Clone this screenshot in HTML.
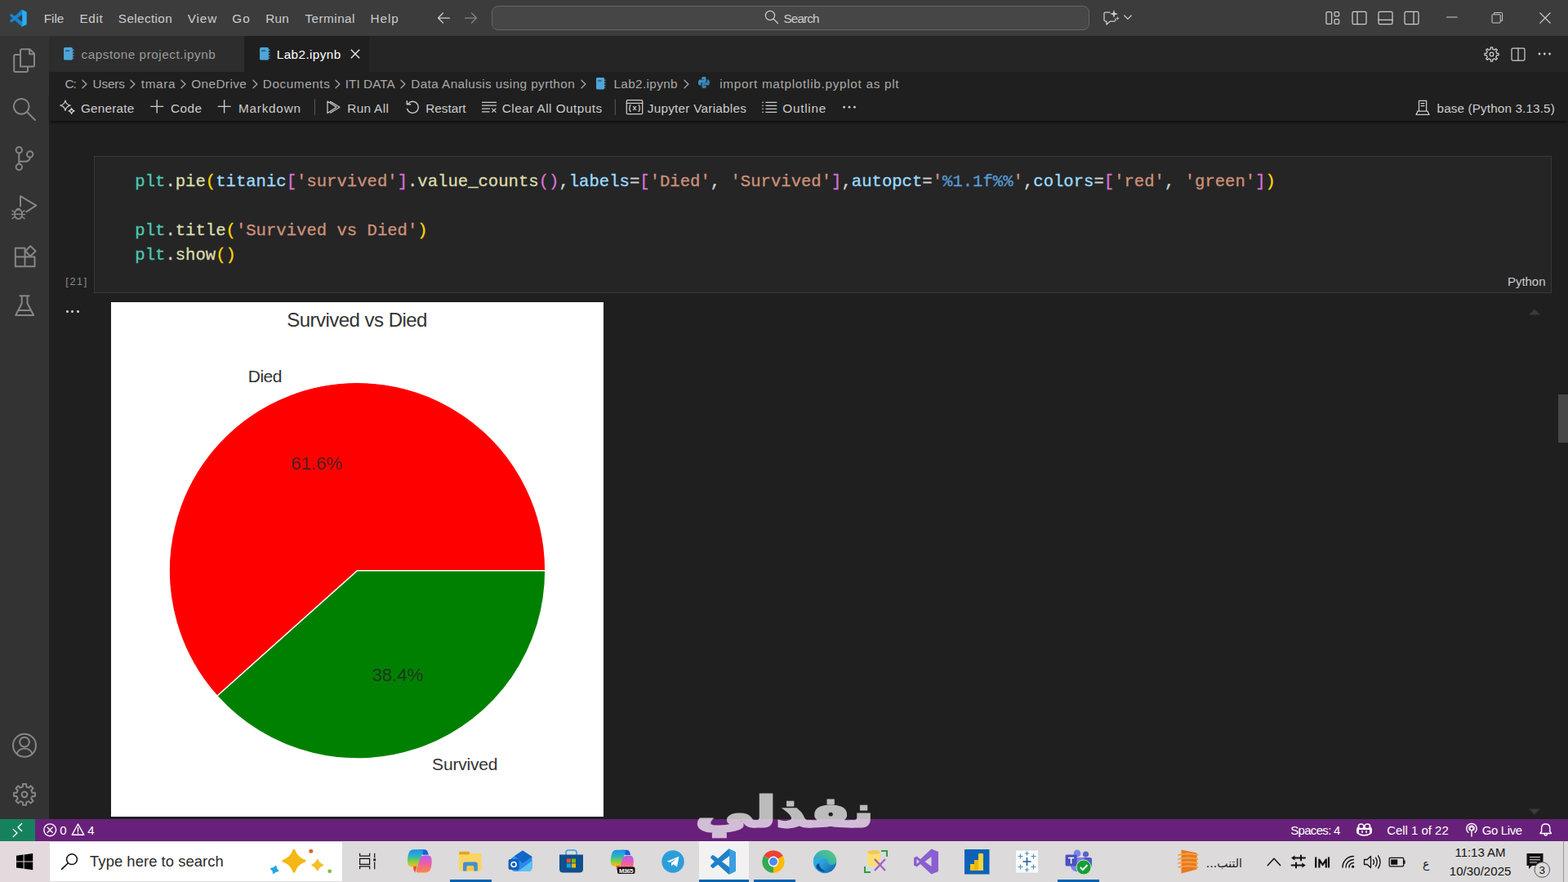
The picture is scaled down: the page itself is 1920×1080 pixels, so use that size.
<!DOCTYPE html>
<html lang="en">
<head>
<meta charset="utf-8">
<title>Lab2.ipynb - Visual Studio Code</title>
<style>
*{box-sizing:border-box;margin:0;padding:0}
html,body{width:1920px;height:1080px;overflow:hidden;background:#1f1f1f}
body{position:relative;font-family:"Liberation Sans",sans-serif;font-size:16px;color:#ccc}
.a{position:absolute}
.t{position:absolute;white-space:nowrap;line-height:1}
svg{position:absolute;overflow:visible}
.s{fill:none;stroke:#ccc;stroke-width:1.25;stroke-linecap:round;stroke-linejoin:round}
.g{fill:none;stroke:#868686;stroke-width:2;stroke-linecap:round;stroke-linejoin:round}
#titlebar{left:0;top:0;width:1920px;height:44px;background:#3c3c3c}
#search{left:602px;top:7px;width:732px;height:30px;background:#464646;border:1px solid #666;border-radius:8px}
#activity{left:0;top:44px;width:60px;height:959px;background:#333}
#tabs{left:60px;top:44px;width:1860px;height:44px;background:#252526}
#tab1{left:0;top:0;width:239px;height:44px;background:#2d2d2d}
#tab2{left:239px;top:0;width:153px;height:44px;background:#1f1f1f}
#crumbs{left:60px;top:88px;width:1860px;height:27px;background:#1f1f1f}
#nbtool{left:60px;top:115px;width:1860px;height:33px;background:#1f1f1f;box-shadow:0 3px 3px -1px rgba(0,0,0,.55)}
#cell{left:115px;top:191px;width:1785px;height:168px;background:#252526;border:1px solid #383838}
#plot{left:136px;top:370px;width:603px;height:630px;background:#fff}
#status{left:0;top:1003px;width:1920px;height:27px;background:#68217a}
#remote{left:0;top:0;width:43px;height:27px;background:#16825d}
#taskbar{left:0;top:1030px;width:1920px;height:50px;background:#dcdadb}
#start{left:0;top:0;width:61px;height:50px;background:#e4dadd}
#tsearch{left:61px;top:1px;width:358px;height:48px;background:#fff}
.ul{position:absolute;height:3px;top:47px;background:#0063b1}
pre{position:absolute;font-family:"Liberation Mono",monospace;font-size:20.6px;line-height:30px;color:#d4d4d4;white-space:pre;-webkit-text-stroke:.3px currentColor}
.m{color:#4ec9b0}.f{color:#dcdcaa}.v{color:#9cdcfe}.q{color:#ce9178}.y{color:#ffd700}.p{color:#da70d6}.b{color:#569cd6}
</style>
</head>
<body>
<div id="titlebar" class="a">
<svg style="left:11.8px;top:11.8px" width="20.5" height="20.5" viewBox="0 0 100 100"><path d="M96.46 10.8 L75.86 .88 a6.23 6.23 0 0 0 -7.1 1.2 L29.35 38.04 12.19 25.01 a4.16 4.16 0 0 0 -5.31 .24 l-5.5 5.01 a4.17 4.17 0 0 0 0 6.16 L16.25 50 1.37 63.58 a4.17 4.17 0 0 0 0 6.16 l5.5 5.01 a4.16 4.16 0 0 0 5.32 .24 l17.16 -13.03 39.41 35.96 a6.22 6.22 0 0 0 7.1 1.2 l20.6 -9.9 A6.25 6.25 0 0 0 100 83.59 V16.41 a6.25 6.25 0 0 0 -3.54 -5.62Z M75.02 72.7 L45.11 50 l29.9 -22.7Z" fill="#1685d0" fill-rule="evenodd"/><path d="M75.86 .88 L96.46 10.8 A6.25 6.25 0 0 1 100 16.41 V83.59 A6.25 6.25 0 0 1 96.46 89.2 L75.86 99.1 A6.2 6.2 0 0 1 70 99 L75.02 92 V8 L70 1 A6.2 6.2 0 0 1 75.86 .88Z" fill="#2aaef6"/></svg>
<div class="t" style="left:53.8px;top:15.0px;font-size:15.3px;color:#ccc;letter-spacing:-0.08px;">File</div>
<div class="t" style="left:97.5px;top:15.0px;font-size:15.3px;color:#ccc;letter-spacing:0.65px;">Edit</div>
<div class="t" style="left:144.8px;top:15.0px;font-size:15.3px;color:#ccc;letter-spacing:0.38px;">Selection</div>
<div class="t" style="left:229.8px;top:15.0px;font-size:15.3px;color:#ccc;letter-spacing:0.84px;">View</div>
<div class="t" style="left:284.2px;top:15.0px;font-size:15.3px;color:#ccc;letter-spacing:1.19px;">Go</div>
<div class="t" style="left:325.2px;top:15.0px;font-size:15.3px;color:#ccc;letter-spacing:0.27px;">Run</div>
<div class="t" style="left:373.5px;top:15.0px;font-size:15.3px;color:#ccc;letter-spacing:0.45px;">Terminal</div>
<div class="t" style="left:453.5px;top:15.0px;font-size:15.3px;color:#ccc;letter-spacing:0.94px;">Help</div>
<svg style="left:535px;top:14px" width="17" height="16" viewBox="0 0 17 16"><path class="s" d="M1.5 8 H15.5 M7.5 2 L1.5 8 L7.5 14"/></svg>
<svg style="left:568px;top:14px" width="17" height="16" viewBox="0 0 17 16"><path class="s" style="stroke:#868686" d="M1.5 8 H15.5 M9.5 2 L15.5 8 L9.5 14"/></svg>
<div id="search" class="a"></div>
<svg style="left:936px;top:12px" width="18" height="18" viewBox="0 0 18 18"><circle class="s" cx="7" cy="7" r="5.6"/><path class="s" d="M11.2 11.2 L16.5 16.5"/></svg>
<div class="t" style="left:959.5px;top:15.0px;font-size:15.3px;color:#ccc;letter-spacing:-0.90px;">Search</div>
<svg style="left:1351px;top:12px" width="20" height="20" viewBox="0 0 20 20"><path class="s" d="M8 3 H2.5 Q1 3 1 4.5 V12.5 Q1 14 2.5 14 H4 V18 L8.5 14 H13.5 Q15 14 15 12.5 V11"/><path d="M13 0 L14.2 3.8 L18 5 L14.2 6.2 L13 10 L11.8 6.2 L8 5 L11.8 3.8 Z M17.5 8 L18.1 9.9 L20 10.5 L18.1 11.1 L17.5 13 L16.9 11.1 L15 10.5 L16.9 9.9 Z" fill="#ccc"/></svg>
<svg style="left:1376px;top:18px" width="10" height="7" viewBox="0 0 10 7"><path class="s" d="M.8 1 L5 5.4 L9.2 1"/></svg>
<svg style="left:1623px;top:13px" width="18" height="18" viewBox="0 0 18 18"><rect class="s" x="1" y="1.6" width="6.6" height="14.8" rx="1.4"/><rect class="s" x="11" y="1.6" width="5.6" height="5.2" rx="1.4"/><rect class="s" x="11" y="10.6" width="5.6" height="5.8" rx="1.4"/></svg>
<svg style="left:1655px;top:13px" width="19" height="18" viewBox="0 0 19 18"><rect class="s" x="1" y="1.3" width="17" height="15.4" rx="1.6"/><path class="s" d="M7 1.3 V16.7"/></svg>
<svg style="left:1687px;top:13px" width="19" height="18" viewBox="0 0 19 18"><rect class="s" x="1" y="1.3" width="17" height="15.4" rx="1.6"/><path class="s" d="M1 11.3 H18"/></svg>
<svg style="left:1719px;top:13px" width="19" height="18" viewBox="0 0 19 18"><rect class="s" x="1" y="1.3" width="17" height="15.4" rx="1.6"/><path class="s" d="M12 1.3 V16.7"/></svg>
<svg style="left:1771px;top:20px" width="14" height="2" viewBox="0 0 14 2"><path d="M0 1 H13.5" stroke="#ccc" stroke-width="1"/></svg>
<svg style="left:1826px;top:14px" width="15" height="15" viewBox="0 0 15 15"><rect x="1" y="3.8" width="10.2" height="10.2" rx=".8" fill="none" stroke="#ccc"/><path d="M3.6 3.6 V1.5 H12.6 Q13.6 1.5 13.6 2.5 V11.4 H11.4" fill="none" stroke="#ccc"/></svg>
<svg style="left:1885px;top:15px" width="14" height="14" viewBox="0 0 14 14"><path d="M.5 .5 L13.5 13.5 M13.5 .5 L.5 13.5" stroke="#ccc" stroke-width="1.1"/></svg>
</div>
<div id="activity" class="a"></div>
<svg style="left:0;top:0" width="60" height="1003" viewBox="0 0 60 1003">
<path class="g" d="M25 81.5 V62 Q25 60.3 26.7 60.3 H36.5 L42 65.8 V79.8 Q42 81.5 40.3 81.5 Z M36 60.5 V66.3 H41.8"/>
<path class="g" d="M24.6 67 H18.9 Q17.2 67 17.2 68.7 V86.3 Q17.2 88 18.9 88 H32.3 Q34 88 34 86.3 V81.8"/>
<circle class="g" cx="26.2" cy="130.3" r="9.4"/><path class="g" d="M33.2 137.3 L43 147"/>
<circle class="g" cx="23.3" cy="183.7" r="3.7"/><circle class="g" cx="36.7" cy="189" r="3.7"/><circle class="g" cx="23.3" cy="204.5" r="3.7"/><path class="g" d="M23.3 187.6 V200.6 M36.7 192.8 Q36.7 197.8 30 197.8 H23.6"/>
<path class="g" d="M25 252.5 V240.2 L44.3 251.6 L32.3 259.3"/>
<ellipse class="g" cx="22.5" cy="262.3" rx="4.6" ry="5.8" style="stroke-width:1.8"/><path class="g" style="stroke-width:1.5" d="M17.9 262.3 H27.1 M15 258 L18.3 259.8 M30 258 L26.7 259.8 M14.6 262.6 H17.6 M27.4 262.6 H30.4 M15 267.6 L18.3 265.4 M30 267.6 L26.7 265.4 M20 256.8 Q22.5 254.5 25 256.8"/>
<path class="g" d="M30.5 303.8 H18.8 V326.2 H42.5 V314.6 H18.8 M30.5 303.8 V326.2"/><path class="g" d="M37.3 301.2 L43.6 307.5 L37.3 313.8 L31 307.5 Z"/>
<path class="g" d="M24.5 362.2 H35.6 M26.7 362.5 V371.5 L19.2 386 H41.2 L33.5 371.5 V362.5 M22.3 380 H38"/>
<circle class="g" cx="30" cy="912.8" r="14"/><circle class="g" cx="30" cy="908.6" r="5.9"/><path class="g" d="M20.6 922.6 Q23.4 916.6 30 916.6 Q36.6 916.6 39.4 922.6"/>
<path class="g" d="M27.83 963.45 L27.95 959.96 L32.05 959.96 L32.17 963.45 L35.15 964.68 L37.70 962.30 L40.60 965.20 L38.22 967.75 L39.45 970.73 L42.94 970.85 L42.94 974.95 L39.45 975.07 L38.22 978.05 L40.60 980.60 L37.70 983.50 L35.15 981.12 L32.17 982.35 L32.05 985.84 L27.95 985.84 L27.83 982.35 L24.85 981.12 L22.30 983.50 L19.40 980.60 L21.78 978.05 L20.55 975.07 L17.06 974.95 L17.06 970.85 L20.55 970.73 L21.78 967.75 L19.40 965.20 L22.30 962.30 L24.85 964.68Z"/><circle class="g" cx="30" cy="972.8" r="3.4"/>
</svg>
<div id="tabs" class="a"><div id="tab1" class="a"></div><div id="tab2" class="a"></div></div>
<svg style="left:77.7px;top:58px" width="13" height="15.5" viewBox="0 0 12.5 15"><path d="M1.5 0 H9 Q10.5 0 10.5 1.5 V13.5 Q10.5 15 9 15 H1.5 Q0 15 0 13.5 V1.5 Q0 0 1.5 0Z" fill="#4fa5d8"/><rect x="2" y="3.4" width="5" height="1.5" fill="#235a80"/><path d="M11.3 2.5 V4 M11.3 5.8 V7.3 M11.3 9.1 V10.6 M11.3 12.2 V13.2" stroke="#4fa5d8" stroke-width="1.3"/></svg>
<div class="t" style="left:99.5px;top:59.0px;font-size:15.3px;color:#9a9a9a;letter-spacing:0.53px;">capstone project.ipynb</div>
<svg style="left:317.5px;top:58px" width="13" height="15.5" viewBox="0 0 12.5 15"><path d="M1.5 0 H9 Q10.5 0 10.5 1.5 V13.5 Q10.5 15 9 15 H1.5 Q0 15 0 13.5 V1.5 Q0 0 1.5 0Z" fill="#4fa5d8"/><rect x="2" y="3.4" width="5" height="1.5" fill="#235a80"/><path d="M11.3 2.5 V4 M11.3 5.8 V7.3 M11.3 9.1 V10.6 M11.3 12.2 V13.2" stroke="#4fa5d8" stroke-width="1.3"/></svg>
<div class="t" style="left:338.8px;top:59.0px;font-size:15.3px;color:#fff;letter-spacing:0.39px;">Lab2.ipynb</div>
<svg style="left:429px;top:60px" width="12" height="12" viewBox="0 0 12 12"><path d="M.8 .8 L11.2 11.2 M11.2 .8 L.8 11.2" stroke="#e8e8e8" stroke-width="1.4"/></svg>
<svg style="left:1817px;top:57px" width="19" height="19" viewBox="0 0 19 19"><path d="M8.29 3.21 L8.37 0.97 L10.63 0.97 L10.71 3.21 L13.09 4.20 L14.73 2.67 L16.33 4.27 L14.80 5.91 L15.79 8.29 L18.03 8.37 L18.03 10.63 L15.79 10.71 L14.80 13.09 L16.33 14.73 L14.73 16.33 L13.09 14.80 L10.71 15.79 L10.63 18.03 L8.37 18.03 L8.29 15.79 L5.91 14.80 L4.27 16.33 L2.67 14.73 L4.20 13.09 L3.21 10.71 L0.97 10.63 L0.97 8.37 L3.21 8.29 L4.20 5.91 L2.67 4.27 L4.27 2.67 L5.91 4.20Z" class="s" style="stroke-width:1.3"/><circle class="s" cx="9.5" cy="9.5" r="2.3"/></svg>
<svg style="left:1850px;top:58px" width="18" height="17" viewBox="0 0 18 17"><rect class="s" x="1" y="1" width="16" height="15" rx="1.5"/><path class="s" d="M9 1 V16"/></svg>
<svg style="left:1883px;top:64px" width="17" height="4" viewBox="0 0 17 4"><circle cx="2" cy="2" r="1.4" fill="#ccc"/><circle cx="8.3" cy="2" r="1.4" fill="#ccc"/><circle cx="14.6" cy="2" r="1.4" fill="#ccc"/></svg>
<div id="crumbs" class="a"></div>
<div class="t" style="left:79.5px;top:95.0px;font-size:15.3px;color:#a9a9a9;letter-spacing:-1.00px;">C:</div>
<div class="t" style="left:113.5px;top:95.0px;font-size:15.3px;color:#a9a9a9;letter-spacing:-0.16px;">Users</div>
<div class="t" style="left:172.8px;top:95.0px;font-size:15.3px;color:#a9a9a9;letter-spacing:0.65px;">tmara</div>
<div class="t" style="left:234.2px;top:95.0px;font-size:15.3px;color:#a9a9a9;letter-spacing:0.43px;">OneDrive</div>
<div class="t" style="left:321.8px;top:95.0px;font-size:15.3px;color:#a9a9a9;letter-spacing:0.58px;">Documents</div>
<div class="t" style="left:422.8px;top:95.0px;font-size:15.3px;color:#a9a9a9;letter-spacing:0.05px;">ITI DATA</div>
<div class="t" style="left:503.2px;top:95.0px;font-size:15.3px;color:#a9a9a9;letter-spacing:0.42px;">Data Analusis using pyrthon</div>
<div class="t" style="left:751.5px;top:95.0px;font-size:15.3px;color:#a9a9a9;letter-spacing:0.35px;">Lab2.ipynb</div>
<div class="t" style="left:881.2px;top:95.0px;font-size:15.3px;color:#a9a9a9;letter-spacing:0.71px;">import matplotlib.pyplot as plt</div>
<svg style="left:100.3px;top:95.5px" width="8" height="13" viewBox="0 0 8 13"><path d="M1 2.2 L5.9 7 L1 11.8" fill="none" stroke="#a9a9a9" stroke-width="1.25" stroke-linecap="round" stroke-linejoin="round"/></svg>
<svg style="left:159.3px;top:95.5px" width="8" height="13" viewBox="0 0 8 13"><path d="M1 2.2 L5.9 7 L1 11.8" fill="none" stroke="#a9a9a9" stroke-width="1.25" stroke-linecap="round" stroke-linejoin="round"/></svg>
<svg style="left:220.5px;top:95.5px" width="8" height="13" viewBox="0 0 8 13"><path d="M1 2.2 L5.9 7 L1 11.8" fill="none" stroke="#a9a9a9" stroke-width="1.25" stroke-linecap="round" stroke-linejoin="round"/></svg>
<svg style="left:308.5px;top:95.5px" width="8" height="13" viewBox="0 0 8 13"><path d="M1 2.2 L5.9 7 L1 11.8" fill="none" stroke="#a9a9a9" stroke-width="1.25" stroke-linecap="round" stroke-linejoin="round"/></svg>
<svg style="left:409.7px;top:95.5px" width="8" height="13" viewBox="0 0 8 13"><path d="M1 2.2 L5.9 7 L1 11.8" fill="none" stroke="#a9a9a9" stroke-width="1.25" stroke-linecap="round" stroke-linejoin="round"/></svg>
<svg style="left:490px;top:95.5px" width="8" height="13" viewBox="0 0 8 13"><path d="M1 2.2 L5.9 7 L1 11.8" fill="none" stroke="#a9a9a9" stroke-width="1.25" stroke-linecap="round" stroke-linejoin="round"/></svg>
<svg style="left:710.7px;top:95.5px" width="8" height="13" viewBox="0 0 8 13"><path d="M1 2.2 L5.9 7 L1 11.8" fill="none" stroke="#a9a9a9" stroke-width="1.25" stroke-linecap="round" stroke-linejoin="round"/></svg>
<svg style="left:836.5px;top:95.5px" width="8" height="13" viewBox="0 0 8 13"><path d="M1 2.2 L5.9 7 L1 11.8" fill="none" stroke="#a9a9a9" stroke-width="1.25" stroke-linecap="round" stroke-linejoin="round"/></svg>
<svg style="left:730px;top:94.5px" width="12" height="14.5" viewBox="0 0 12.5 15"><path d="M1.5 0 H9 Q10.5 0 10.5 1.5 V13.5 Q10.5 15 9 15 H1.5 Q0 15 0 13.5 V1.5 Q0 0 1.5 0Z" fill="#4fa5d8"/><rect x="2" y="3.4" width="5" height="1.5" fill="#235a80"/><path d="M11.3 2.5 V4 M11.3 5.8 V7.3 M11.3 9.1 V10.6 M11.3 12.2 V13.2" stroke="#4fa5d8" stroke-width="1.3"/></svg>
<svg style="left:855px;top:94px" width="14" height="14" viewBox="0 0 14 14"><path d="M6.9 0 C4 0 4.2 1.3 4.2 1.3 V2.9 H7 V3.4 H2.4 C2.4 3.4 0 3.1 0 6.9 C0 10.7 2.1 10.5 2.1 10.5 H3.4 V8.6 C3.4 8.6 3.3 6.9 5.1 6.9 H8 C8 6.9 9.6 6.9 9.6 5.3 V1.7 C9.6 1.7 9.9 0 6.9 0Z" fill="#3c8fc4"/><path d="M7.1 14 C10 14 9.8 12.7 9.8 12.7 V11.1 H7 V10.6 H11.6 C11.6 10.6 14 10.9 14 7.1 C14 3.3 11.9 3.5 11.9 3.5 H10.6 V5.4 C10.6 5.4 10.7 7.1 8.9 7.1 H6 C6 7.1 4.4 7.1 4.4 8.7 V12.3 C4.4 12.3 4.1 14 7.1 14Z" fill="#3c8fc4" opacity=".85"/></svg>
<div id="nbtool" class="a"></div>
<svg style="left:0;top:0" width="1920" height="150" viewBox="0 0 1920 150">
<path class="s" d="M80 122.99999999999999 Q81.04 128.16 86.2 129.2 Q81.04 130.24 80 135.39999999999998 Q78.96 130.24 73.8 129.2 Q78.96 128.16 80 122.99999999999999Z"/><path class="s" d="M87.6 132.3 Q88.19 135.21 91.1 135.8 Q88.19 136.39 87.6 139.3 Q87.01 136.39 84.1 135.8 Q87.01 135.21 87.6 132.3Z"/>
<path class="s" style="stroke-width:1.4;stroke-linecap:butt" d="M184.2 130.4 H200.2 M192.2 122.2 V138.6"/>
<path class="s" style="stroke-width:1.4;stroke-linecap:butt" d="M266.6 130.4 H282.6 M274.6 122.2 V138.6"/>
<path d="M385.5 121.3 V140.8" stroke="#5a5a5a" stroke-width="1"/>
<path d="M753.3 121.3 V140.8" stroke="#5a5a5a" stroke-width="1"/>
<path class="s" d="M401 124 V138.6 L412 131.3 Z M404.5 124.4 L416 131.3 L404.5 138.2"/>
<path class="s" style="stroke-width:1.4" d="M499.5 127.3 A7 7 0 1 1 498.6 133.5 M498.3 123.6 V127.8 H502.6"/>
<path class="s" style="stroke-linecap:butt" d="M590 125.4 H608 M590 129.2 H608 M590 133 H600 M590 136.8 H599.5 M602.2 132.6 L607.4 137.6 M607.4 132.6 L602.2 137.6"/>
<rect class="s" x="767.3" y="122.6" width="19.4" height="17" rx="1.2"/><path class="s" d="M767.3 126.3 H786.7"/>
<path class="s" style="stroke-linecap:butt;stroke-width:1.3" d="M937.5 125.3 H951.3 M937.5 129.3 H951.3 M937.5 133.3 H951.3 M937.5 137.3 H951.3"/><path style="stroke:#ccc;stroke-width:1.3" d="M933.3 125.3 H934.8 M933.3 129.3 H934.8 M933.3 133.3 H934.8 M933.3 137.3 H934.8"/>
<circle cx="1033.6" cy="131.2" r="1.4" fill="#ccc"/>
<circle cx="1040" cy="131.2" r="1.4" fill="#ccc"/>
<circle cx="1046.4" cy="131.2" r="1.4" fill="#ccc"/>
<path class="s" d="M1737.5 136 V123.4 H1746.6 V136 M1734 140.4 H1750 L1748 136 H1736 Z M1740 126.5 H1744 M1740 129.5 H1744"/>
</svg>
<div class="t" style="left:769.8px;top:128.0px;font-size:9px;color:#ccc;letter-spacing:1.70px;font-weight:700;">(x)</div>
<div class="t" style="left:99.0px;top:125.3px;font-size:15.3px;color:#ccc;letter-spacing:0.22px;">Generate</div>
<div class="t" style="left:209.0px;top:125.3px;font-size:15.3px;color:#ccc;letter-spacing:0.47px;">Code</div>
<div class="t" style="left:292.0px;top:125.3px;font-size:15.3px;color:#ccc;letter-spacing:0.77px;">Markdown</div>
<div class="t" style="left:425.3px;top:125.3px;font-size:15.3px;color:#ccc;letter-spacing:0.34px;">Run All</div>
<div class="t" style="left:521.2px;top:125.3px;font-size:15.3px;color:#ccc;letter-spacing:-0.00px;">Restart</div>
<div class="t" style="left:614.8px;top:125.3px;font-size:15.3px;color:#ccc;letter-spacing:0.47px;">Clear All Outputs</div>
<div class="t" style="left:792.8px;top:125.3px;font-size:15.3px;color:#ccc;letter-spacing:0.25px;">Jupyter Variables</div>
<div class="t" style="left:958.3px;top:125.3px;font-size:15.3px;color:#ccc;letter-spacing:0.75px;">Outline</div>
<div class="t" style="left:1759.5px;top:125.3px;font-size:15.3px;color:#ccc;letter-spacing:0.12px;">base (Python 3.13.5)</div>
<div id="cell" class="a"></div>
<pre style="left:165.3px;top:207.5px"><span class=m>plt</span>.<span class=f>pie</span><span class=y>(</span><span class=v>titanic</span><span class=p>[</span><span class=q>'survived'</span><span class=p>]</span>.<span class=f>value_counts</span><span class=p>()</span>,<span class=v>labels</span>=<span class=p>[</span><span class=q>'Died'</span>, <span class=q>'Survived'</span><span class=p>]</span>,<span class=v>autopct</span>=<span class=q>'</span><span class=b>%1.1f%%</span><span class=q>'</span>,<span class=v>colors</span>=<span class=p>[</span><span class=q>'red'</span>, <span class=q>'green'</span><span class=p>]</span><span class=y>)</span>

<span class=m>plt</span>.<span class=f>title</span><span class=y>(</span><span class=q>'Survived vs Died'</span><span class=y>)</span>
<span class=m>plt</span>.<span class=f>show</span><span class=y>()</span></pre>
<div class="t" style="left:80.3px;top:338.7px;font-size:12.6px;color:#8a8a8a;letter-spacing:1.66px;">[21]</div>
<div class="t" style="left:1846.0px;top:336.9px;font-size:15px;color:#ccc;letter-spacing:-0.04px;">Python</div>
<div class="a" style="left:80.8px;top:379.8px;width:3.2px;height:2.8px;border-radius:45%;background:#ccc"></div>
<div class="a" style="left:87.2px;top:379.8px;width:3.2px;height:2.8px;border-radius:45%;background:#ccc"></div>
<div class="a" style="left:93.6px;top:379.8px;width:3.2px;height:2.8px;border-radius:45%;background:#ccc"></div>
<div id="plot" class="a"></div>
<svg style="left:0;top:0" width="1920" height="1080" viewBox="0 0 1920 1080">
<path d="M437.5 698.7 L667.8 698.7 A230.3 230.3 0 1 0 265.87 852.26 Z" fill="#ff0000" stroke="#fff" stroke-width="1.4" stroke-linejoin="round"/>
<path d="M437.5 698.7 L265.87 852.26 A230.3 230.3 0 0 0 667.8 698.7 Z" fill="#008000" stroke="#fff" stroke-width="1.4" stroke-linejoin="round"/>
</svg>
<div class="t" style="left:351.2px;top:380.1px;font-size:24px;color:#333;letter-spacing:-0.52px;">Survived vs Died</div>
<div class="t" style="left:303.7px;top:449.8px;font-size:21px;color:#333;letter-spacing:-0.46px;">Died</div>
<div class="t" style="left:529.1px;top:924.5px;font-size:21px;color:#333;letter-spacing:-0.20px;">Survived</div>
<div class="t" style="left:356.2px;top:557.4px;font-size:22.3px;color:rgba(38,38,38,.82);letter-spacing:-0.08px;">61.6%</div>
<div class="t" style="left:455.5px;top:816.4px;font-size:22.3px;color:rgba(38,38,38,.82);letter-spacing:-0.11px;">38.4%</div>
<div class="a" style="left:1908px;top:483px;width:12px;height:59px;background:#474747"></div>
<svg style="left:1872px;top:378px" width="14" height="8" viewBox="0 0 14 8"><path d="M0 7.5 L7 .5 L14 7.5Z" fill="#3a3a3a"/></svg>
<svg style="left:1872px;top:990px" width="14" height="8" viewBox="0 0 14 8"><path d="M0 .5 L7 7.5 L14 .5Z" fill="#3a3a3a"/></svg>
<div id="status" class="a"><div id="remote" class="a"></div></div>
<svg style="left:0;top:1003px" width="1920" height="28" viewBox="0 1003 1920 28">
<path fill="none" stroke="#fff" stroke-width="1.4" stroke-linecap="round" stroke-linejoin="round" d="M16.2 1015.6 L21 1020 L16.2 1024.6 M26.6 1008.6 L22 1013 L26.6 1017.6"/>
<circle fill="none" stroke="#fff" stroke-width="1.4" stroke-linecap="round" stroke-linejoin="round" cx="61.2" cy="1016.3" r="7.4"/><path fill="none" stroke="#fff" stroke-width="1.4" stroke-linecap="round" stroke-linejoin="round" d="M58.2 1013.3 L64.2 1019.3 M64.2 1013.3 L58.2 1019.3"/>
<path fill="none" stroke="#fff" stroke-width="1.4" stroke-linecap="round" stroke-linejoin="round" d="M95.5 1009 L102.8 1022.3 H88.2 Z M95.5 1013.5 V1018 M95.5 1020 V1020.3"/>
<path fill="#fff" d="M1661 1015.5 Q1661 1013.5 1662.6 1012.8 Q1662.4 1008.3 1666.5 1008.3 Q1669.5 1008.3 1670.5 1010.2 Q1671.5 1008.3 1674.5 1008.3 Q1678.6 1008.3 1678.4 1012.8 Q1680 1013.5 1680 1015.5 V1019 Q1680 1020.3 1678.5 1021.3 Q1675 1023.8 1670.5 1023.8 Q1666 1023.8 1662.5 1021.3 Q1661 1020.3 1661 1019 Z"/>
<path fill="#68217a" d="M1664.2 1012 Q1664.2 1009.8 1666.6 1009.8 Q1669.3 1009.8 1669.3 1012 Q1669.3 1014 1666.8 1014 Q1664.2 1014 1664.2 1012Z M1671.7 1012 Q1671.7 1009.8 1674.4 1009.8 Q1676.8 1009.8 1676.8 1012 Q1676.8 1014 1674.2 1014 Q1671.7 1014 1671.7 1012Z M1664 1016 H1677 V1020.2 Q1674 1022 1670.5 1022 Q1667 1022 1664 1020.2Z"/>
<path stroke="#fff" stroke-width="1.5" stroke-linecap="round" d="M1668 1017.6 V1019.6 M1673 1017.6 V1019.6"/>
<circle fill="none" stroke="#fff" stroke-width="1.4" stroke-linecap="round" stroke-linejoin="round" cx="1802" cy="1014.5" r="2.2"/><path fill="none" stroke="#fff" stroke-width="1.4" stroke-linecap="round" stroke-linejoin="round" d="M1797.9 1019.2 A6.2 6.2 0 1 1 1806.1 1019.2 M1802 1017 V1024"/><path fill="none" stroke="#fff" stroke-width="1.4" stroke-linecap="round" stroke-linejoin="round" d="M1799.6 1017 A3.6 3.6 0 1 1 1804.4 1017" style="stroke-width:1"/>
<path fill="none" stroke="#fff" stroke-width="1.4" stroke-linecap="round" stroke-linejoin="round" d="M1886 1020.5 H1899.5 L1897.8 1018 V1014 Q1897.8 1009 1892.7 1009 Q1887.6 1009 1887.6 1014 V1018 Z M1891 1021 Q1891 1023 1892.7 1023 Q1894.4 1023 1894.4 1021"/>
</svg>
<div class="t" style="left:73.2px;top:1009.1px;font-size:15px;color:#fff;letter-spacing:1.26px;">0</div>
<div class="t" style="left:107.2px;top:1009.1px;font-size:15px;color:#fff;letter-spacing:1.26px;">4</div>
<div class="t" style="left:1580.2px;top:1009.1px;font-size:15px;color:#fff;letter-spacing:-0.68px;">Spaces: 4</div>
<div class="t" style="left:1698.2px;top:1009.1px;font-size:15px;color:#fff;letter-spacing:-0.03px;">Cell 1 of 22</div>
<div class="t" style="left:1814.7px;top:1009.1px;font-size:15px;color:#fff;letter-spacing:-0.37px;">Go Live</div>
<div id="taskbar" class="a"><div id="start" class="a"></div><div id="tsearch" class="a"></div>
<div class="a" style="left:856px;top:0;width:61px;height:50px;background:#f3f2f3"></div>
<div class="ul" style="left:551px;width:51px"></div>
<div class="ul" style="left:856px;width:61px"></div>
<div class="ul" style="left:923px;width:51px"></div>
<div class="ul" style="left:1295px;width:51px"></div>
<div class="a" style="left:1914px;top:0;width:1px;height:50px;background:#9a9a9a"></div>
</div>
<svg style="left:0;top:1031px" width="1920" height="49" viewBox="0 1031 1920 49">
<path fill="#000" d="M20 1047.8 L28.6 1046.6 V1054.6 H20Z M29.6 1046.4 L40.2 1045 V1054.6 H29.6Z M20 1055.6 H28.6 V1063.6 L20 1062.4Z M29.6 1055.6 H40.2 V1065.2 L29.6 1063.8Z"/>
<circle cx="88" cy="1052.2" r="6.4" fill="none" stroke="#111" stroke-width="1.5"/><path d="M83.4 1056.8 L75.6 1064.4" stroke="#111" stroke-width="1.6" stroke-linecap="round"/>
<path d="M360 1041.2 Q363.28 1050.92 373 1054.2 Q363.28 1057.48 360 1067.2 Q356.72 1057.48 347 1054.2 Q356.72 1050.92 360 1041.2Z" fill="#f5b716" stroke="#f5b716" stroke-width="3" stroke-linejoin="round"/><path d="M388.7 1052.9 Q390.29 1057.61 395.0 1059.2 Q390.29 1060.79 388.7 1065.5 Q387.11 1060.79 382.4 1059.2 Q387.11 1057.61 388.7 1052.9Z" fill="#f6be2c" stroke="#f6be2c" stroke-width="2" stroke-linejoin="round"/><path d="M336.2 1060.4 Q337.36 1063.84 340.8 1065 Q337.36 1066.16 336.2 1069.6 Q335.04 1066.16 331.59999999999997 1065 Q335.04 1063.84 336.2 1060.4Z" fill="#22a7e6" stroke="#22a7e6" stroke-width="1.6" stroke-linejoin="round" transform="rotate(18 336.2 1065)"/><circle cx="380.8" cy="1042.3" r="2.5" fill="#e0622c"/><circle cx="403.7" cy="1066.8" r="2.4" fill="#83bd3c"/>
<path fill="none" stroke="#111" stroke-width="1.2" d="M440.6 1044.8 V1048.2 H452.6 V1044.8 M440.6 1051.4 H452.6 V1058.4 H440.6Z M440.6 1064.2 V1060.8 H452.6 V1064.2 M458.7 1044.8 V1050.2 M458.7 1055.4 V1064.2"/><rect x="457.3" y="1051.4" width="2.8" height="2.8" fill="#111"/>
<defs><linearGradient id="cp1" x1="0" y1="0" x2="0" y2="1"><stop offset="0" stop-color="#1c8ef0"/><stop offset=".4" stop-color="#2cb8b8"/><stop offset=".7" stop-color="#8ccc3c"/><stop offset="1" stop-color="#f0c020"/></linearGradient><linearGradient id="cp2" x1="0" y1="0" x2="0" y2="1"><stop offset="0" stop-color="#b060f0"/><stop offset=".45" stop-color="#ec5ea8"/><stop offset="1" stop-color="#ff8a3c"/></linearGradient></defs>
<g transform="translate(513.8 1054.4) scale(1.04)"><path d="M-1 -13.6 H5.5 Q8.6 -13.6 9.6 -10.6 L10.6 -7.4 H4 Z" fill="#1560d8"/><path d="M-14 2.6 Q-15 -4 -12.6 -10 Q-11 -13.6 -7 -13.6 H2 Q5 -13.6 3.6 -10 L-0.6 3 Q-1.8 6.6 -5.4 6.6 H-10 Q-13.4 6.6 -14 2.6Z" fill="url(#cp1)"/><path d="M-7.6 6 L-3 6 L-5.4 13.6 H-3 Q-6 13.6 -7 10.6 Z" fill="#f0502c"/><path d="M14 -2.6 Q15 4 12.6 10 Q11 13.6 7 13.6 H-2 Q-5 13.6 -3.6 10 L0.6 -3 Q1.8 -6.6 5.4 -6.6 H10 Q13.4 -6.6 14 -2.6Z" fill="url(#cp2)"/></g>
<path d="M562 1044.6 Q562 1042.8 563.8 1042.8 H573.6 Q575.2 1042.8 575.2 1044.6 Q575.2 1046.8 573.4 1046.8 H562Z" fill="#e2a614"/><path d="M562 1046.6 H574 L576 1045 H587.6 Q589.6 1045 589.6 1047 V1064.4 Q589.6 1066.4 587.6 1066.4 H564 Q562 1066.4 562 1064.4Z" fill="#fcd462"/><path d="M567 1066.4 V1058 Q567 1055.4 569.6 1055.4 H582.2 Q584.8 1055.4 584.8 1058 V1066.4 H580.2 V1061.6 Q580.2 1060 578.6 1060 H573.2 Q571.6 1060 571.6 1061.6 V1066.4Z" fill="#3f8fd8"/><path d="M571.6 1066.4 V1061.6 Q571.6 1060 573.2 1060 H578.6 Q580.2 1060 580.2 1061.6 V1066.4Z" fill="#fcc838"/>
<path d="M626 1051 L640 1041.5 L651.5 1049 V1062 Q651.5 1067 646.5 1067 H631 Q626 1067 626 1062Z" fill="#2a8be6"/><path d="M630 1048 L640 1041.5 L651.5 1049 L640 1057Z" fill="#1266c8"/><path d="M634 1067 L651.5 1054 V1062 Q651.5 1067 646.5 1067Z" fill="#5cc0f5"/><rect x="622.6" y="1052" width="13" height="13" rx="2.5" fill="#0f5fbf"/><circle cx="629.1" cy="1058.5" r="3" fill="none" stroke="#fff" stroke-width="1.6"/>
<path d="M693 1047 V1044 Q693 1041 696 1041 H703 Q706 1041 706 1044 V1047" fill="none" stroke="#3d9be0" stroke-width="1.6"/><path d="M685 1046.5 H714 V1064 Q714 1068.5 709.5 1068.5 H689.5 Q685 1068.5 685 1064Z" fill="#0f4f8c"/><rect x="694" y="1051.5" width="5" height="5" fill="#f25022"/><rect x="700" y="1051.5" width="5" height="5" fill="#7fba00"/><rect x="694" y="1057.5" width="5" height="5" fill="#00a4ef"/><rect x="700" y="1057.5" width="5" height="5" fill="#ffb900"/>
<g transform="translate(761.8 1054.2) scale(0.98)"><path d="M-1 -13.6 H5.5 Q8.6 -13.6 9.6 -10.6 L10.6 -7.4 H4 Z" fill="#1560d8"/><path d="M-14 2.6 Q-15 -4 -12.6 -10 Q-11 -13.6 -7 -13.6 H2 Q5 -13.6 3.6 -10 L-0.6 3 Q-1.8 6.6 -5.4 6.6 H-10 Q-13.4 6.6 -14 2.6Z" fill="url(#cp1)"/><path d="M-7.6 6 L-3 6 L-5.4 13.6 H-3 Q-6 13.6 -7 10.6 Z" fill="#f0502c"/><path d="M14 -2.6 Q15 4 12.6 10 Q11 13.6 7 13.6 H-2 Q-5 13.6 -3.6 10 L0.6 -3 Q1.8 -6.6 5.4 -6.6 H10 Q13.4 -6.6 14 -2.6Z" fill="url(#cp2)"/></g>
<rect x="756" y="1061.5" width="21.5" height="8.5" rx="2" fill="#111"/>
<circle cx="824" cy="1055" r="13.7" fill="#2a9edb"/><path d="M816.5 1054.8 L831.5 1048.8 L829 1061.6 L824.3 1058.2 L822.2 1060.6 L822 1056.8 L828.8 1050.8 L820.5 1056Z" fill="#fff"/>
<svg x="870" y="1039.5" width="31" height="31" viewBox="0 0 100 100"><path d="M96.46 10.8 L75.86 .88 a6.23 6.23 0 0 0 -7.1 1.2 L29.35 38.04 12.19 25.01 a4.16 4.16 0 0 0 -5.31 .24 l-5.5 5.01 a4.17 4.17 0 0 0 0 6.16 L16.25 50 1.37 63.58 a4.17 4.17 0 0 0 0 6.16 l5.5 5.01 a4.16 4.16 0 0 0 5.32 .24 l17.16 -13.03 39.41 35.96 a6.22 6.22 0 0 0 7.1 1.2 l20.6 -9.9 A6.25 6.25 0 0 0 100 83.59 V16.41 a6.25 6.25 0 0 0 -3.54 -5.62Z M75.02 72.7 L45.11 50 l29.9 -22.7Z" fill="#1f80c8" fill-rule="evenodd"/><path d="M75.86 .88 L96.46 10.8 A6.25 6.25 0 0 1 100 16.41 V83.59 A6.25 6.25 0 0 1 96.46 89.2 L75.86 99.1 A6.2 6.2 0 0 1 70 99 L75.02 92 V8 L70 1 A6.2 6.2 0 0 1 75.86 .88Z" fill="#3a9fe0"/></svg>
<circle cx="947" cy="1055" r="13.8" fill="#fff"/><path d="M947 1055 L935.05 1048.1 A13.8 13.8 0 0 1 958.95 1048.1 Z" fill="#ea4335"/><path d="M947 1055 L958.95 1048.1 A13.8 13.8 0 0 1 947 1068.8 Z" fill="#fbbc05"/><path d="M947 1055 L947 1068.8 A13.8 13.8 0 0 1 935.05 1048.1 Z" fill="#34a853"/><circle cx="947" cy="1055" r="6.4" fill="#fff"/><circle cx="947" cy="1055" r="5" fill="#4c8bf5"/>
<defs><linearGradient id="eg" x1="0" y1="0" x2="1" y2="1"><stop offset="0" stop-color="#35c1f1"/><stop offset=".5" stop-color="#2a9fd8"/><stop offset="1" stop-color="#0c59a4"/></linearGradient><linearGradient id="eg2" x1="0" y1="1" x2="1" y2="0"><stop offset="0" stop-color="#1b9de2"/><stop offset="1" stop-color="#5fd068"/></linearGradient></defs><circle cx="1010" cy="1055" r="14.2" fill="url(#eg)"/><path d="M996 1053 A14.2 14.2 0 0 1 1024.2 1054 Q1024 1059 1018 1059 Q1014 1059 1014 1056 Q1014 1051 1008 1051 Q1000 1051 996 1053Z" fill="url(#eg2)"/><path d="M1003 1057 Q1003 1064 1011 1067 Q1004 1068 1000 1063 Q998 1059 1003 1057Z" fill="#0a4a8c"/>
<ellipse cx="1070" cy="1043.6" rx="7.8" ry="2.6" fill="#f6c65a"/><path d="M1062.2 1043.6 V1058 Q1062.2 1060.6 1070 1060.6 Q1077.8 1060.6 1077.8 1058 V1043.6 Q1077.8 1046.2 1070 1046.2 Q1062.2 1046.2 1062.2 1043.6Z" fill="#fbdf6e"/><path d="M1071 1052 L1084 1066 M1084 1052 L1071 1066" stroke="#a45ad0" stroke-width="2.2"/><path d="M1079 1042 H1086 V1049 M1059 1061 V1068 H1066" fill="none" stroke="#2e9e46" stroke-width="2"/>
<path d="M1140.5 1040.5 L1127 1053 L1122.5 1049.6 L1119 1051.4 V1060.6 L1122.5 1062.4 L1127 1059 L1140.5 1071.5 L1149 1068 V1044Z M1140.5 1050 V1062 L1132.5 1056Z M1122.5 1053 L1125.8 1056 L1122.5 1059Z" fill="#8a5fd0" fill-rule="evenodd" transform="translate(0 -1)"/>
<rect x="1181" y="1040" width="30.5" height="30.5" fill="#0b62b8"/><path d="M1188 1058 H1193 V1066 H1188Z" fill="#f2c811"/><path d="M1193 1053 H1198 V1066 H1193Z" fill="#eab60c"/><path d="M1198 1046 Q1198 1045 1199 1045 H1203 Q1204 1045 1204 1046 V1066 H1198Z" fill="#f5d33a"/>
<rect x="1243.5" y="1041" width="28" height="28" fill="#fbfbfb" stroke="#d0d0d0" stroke-width=".6"/><path d="M1257.5 1050 V1060 M1252.5 1055 H1262.5" stroke="#1f5f9c" stroke-width="1.6"/><path d="M1249.5 1045.5 V1051.5 M1246.5 1048.5 H1252.5 M1265.5 1045.5 V1051.5 M1262.5 1048.5 H1268.5 M1249.5 1058.5 V1064.5 M1246.5 1061.5 H1252.5 M1265.5 1058.5 V1064.5 M1262.5 1061.5 H1268.5 M1257.5 1042.5 V1047.5 M1255 1045 H1260 M1257.5 1062.5 V1067.5 M1255 1065 H1260" stroke="#4a90c8" stroke-width="1.1"/>
<circle cx="1329.5" cy="1046" r="3.6" fill="#5a62c8"/><circle cx="1319" cy="1045" r="4.4" fill="#7b83eb"/><path d="M1325 1050 H1335 Q1337 1050 1337 1052 V1059 Q1337 1064 1331 1064 Q1326 1064 1325 1060Z" fill="#5059c9"/><path d="M1311 1050 H1326 Q1327.5 1050 1327.5 1051.5 V1061 Q1327.5 1067.5 1320 1067.5 Q1312.5 1067.5 1311 1061Z" fill="#7b83eb"/><rect x="1304.6" y="1046.5" width="14" height="14" rx="1.6" fill="#4b53bc"/><path d="M1308 1050.5 H1315.2 M1311.6 1050.5 V1057.5" stroke="#fff" stroke-width="1.5"/><circle cx="1327" cy="1062" r="9" fill="#14a032" stroke="#dcdadb" stroke-width="1"/><path d="M1322.8 1062 L1325.8 1065 L1331.4 1059.2" fill="none" stroke="#fff" stroke-width="2"/>
<path d="M1446.5 1040.6 L1465.5 1044.5 V1064.5 L1446.5 1069.6Z" fill="#e87a1c"/><path d="M1442.5 1047 Q1455 1044 1467.2 1047 M1442.5 1052 Q1455 1049 1467.2 1052 M1442.5 1057 Q1455 1054 1467.2 1057 M1442.5 1062 Q1455 1059 1467.2 1062" fill="none" stroke="#f4a14a" stroke-width="2.2"/>
<path fill="none" stroke="#111" stroke-width="1.5" stroke-linecap="round" stroke-linejoin="round" d="M1552.4 1059.6 L1560 1051.2 L1567.6 1059.6"/>
<path fill="none" stroke="#111" stroke-width="1.5" stroke-linecap="round" stroke-linejoin="round" style="stroke-width:2" d="M1585 1050.5 H1598 M1581.6 1059.5 H1594 M1593 1047.5 V1053.5 M1587 1056.5 V1062.5"/><path d="M1581 1050.5 L1585.5 1047.5 V1053.5Z M1598.8 1059.5 L1594.3 1056.5 V1062.5Z" fill="#111"/>
<path fill="none" stroke="#111" stroke-width="1.5" stroke-linecap="round" stroke-linejoin="round" style="stroke-width:2.2;stroke-linecap:butt" d="M1611.2 1049.5 V1062.5 M1615.4 1062.5 V1052.5 L1619.6 1059 L1623.8 1052.5 V1062.5 M1627 1049.5 V1062.5" style="stroke-width:1.9;stroke-linecap:butt"/>
<path fill="none" stroke="#111" stroke-width="1.5" stroke-linecap="round" stroke-linejoin="round" style="stroke-width:1.4" d="M1644 1062 A13.5 13.5 0 0 1 1657.5 1048.5 M1648 1062 A9.5 9.5 0 0 1 1657.5 1052.5 M1652 1062 A5.5 5.5 0 0 1 1657.5 1056.5"/><circle cx="1656.6" cy="1061.2" r="1.6" fill="#111"/>
<path fill="none" stroke="#111" stroke-width="1.5" stroke-linecap="round" stroke-linejoin="round" style="stroke-width:1.3" d="M1670.5 1052.5 H1674 L1678.5 1048.5 V1062.5 L1674 1058.5 H1670.5Z M1681.5 1052.6 Q1683.5 1055.5 1681.5 1058.4 M1684.5 1050.2 Q1688 1055.5 1684.5 1060.8 M1687.6 1047.8 Q1692.4 1055.5 1687.6 1063.2"/>
<rect x="1701.2" y="1050.4" width="17.4" height="10.4" rx="1" fill="none" stroke="#111" stroke-width="1.5" stroke-linecap="round" stroke-linejoin="round" style="stroke-width:1.3"/><rect x="1703.2" y="1052.4" width="8" height="6.4" fill="#111"/><path d="M1719.8 1053.5 V1057.7" stroke="#111" stroke-width="1.6"/>
<path d="M1869.5 1045 H1889.5 V1060 H1876 L1872 1064 V1060 H1869.5Z" fill="#111"/><path d="M1873 1049.5 H1886 M1873 1052.8 H1886 M1873 1056 H1882" stroke="#dcdadb" stroke-width="1"/><circle cx="1888.3" cy="1065" r="9.3" fill="#dcdadb" stroke="#555" stroke-width="1"/>
</svg>
<div class="t" style="left:110.1px;top:1046.4px;font-size:18.4px;color:#2b2b2b;letter-spacing:0.06px;">Type here to search</div>
<div class="t" style="left:758.0px;top:1062.6px;font-size:7.6px;color:#fff;letter-spacing:-0.50px;font-weight:700;">M365</div>
<div class="t" style="left:1781.5px;top:1036.1px;font-size:15px;color:#111;letter-spacing:-0.04px;">11:13 AM</div>
<div class="t" style="left:1774.8px;top:1059.1px;font-size:15px;color:#111;letter-spacing:0.06px;">10/30/2025</div>
<div class="t" style="left:1884.5px;top:1058.6px;font-size:13.5px;color:#111;letter-spacing:0.09px;">3</div>
<div class="t" dir="rtl" style="left:1470px;top:1044.5px;width:51px;text-align:right;font-family:'DejaVu Sans',sans-serif;font-size:14.2px;line-height:24px;color:#222">التنب...</div>
<div class="t" style="left:1742px;top:1046px;font-family:'DejaVu Sans',sans-serif;font-size:14px;line-height:24px;color:#222">ع</div>
<div class="t" dir="rtl" style="left:840px;top:950px;width:240px;text-align:center;font-family:'DejaVu Sans',sans-serif;font-weight:700;font-size:64px;line-height:80px;color:#fff;-webkit-text-stroke:3.6px #fff;opacity:.7;transform-origin:120px 45px;transform:translate(0.5px,3.5px) scale(1.115,0.797)">نفذلي</div>
</body>
</html>
